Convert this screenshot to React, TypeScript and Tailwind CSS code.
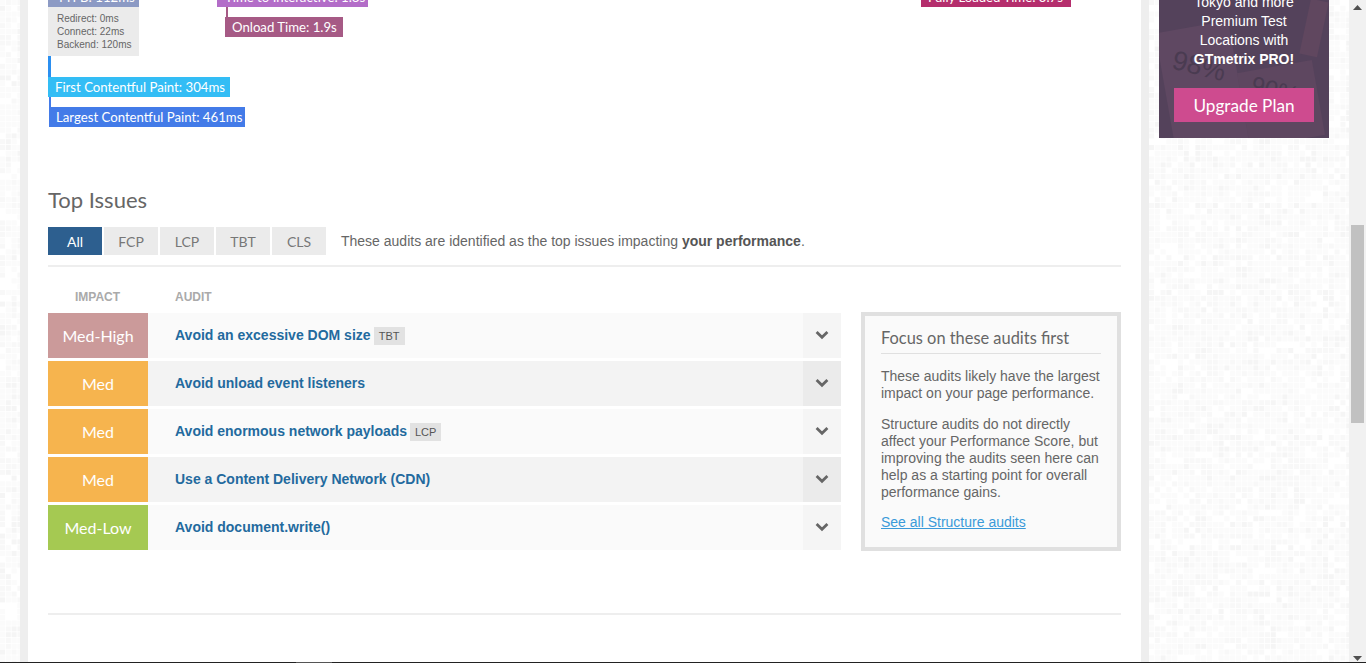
import React from "react";

const label = "[font-family:Lato,'Noto_Sans',sans-serif]";

function Tiles({ seed, cols, rows }: { seed: number; cols: number; rows: number }) {
  const rects: React.ReactElement[] = [];
  let s = seed;
  for (let y = 0; y < rows; y++) {
    for (let x = 0; x < cols; x++) {
      s = (s * 1103515245 + 12345) & 0x7fffffff;
      const v = (s >> 8) % 100;
      if (v < 82) {
        const fill = v < 8 ? "#f5f5f5" : v < 30 ? "#f8f8f8" : "#fbfbfb";
        rects.push(<rect key={`${x}-${y}`} x={x * 5.8} y={y * 5.8} width="5" height="5" fill={fill} />);
      }
    }
  }
  return (
    <svg className="block h-full w-full" aria-hidden="true">
      {rects}
    </svg>
  );
}

function Audit({ impact, color, title, tag, alt }: { impact: string; color: string; title: string; tag?: string; alt?: boolean }) {
  return (
    <div className={`flex h-[45px] items-stretch ${alt ? "bg-[#f3f3f3]" : "bg-[#fafafa]"}`}>
      <div className={`flex w-[100px] items-center justify-center text-[16px] text-white ${label} ${color}`}>{impact}</div>
      <div className="flex flex-1 items-center pl-[27px]">
        <span className="text-[14px] font-bold text-[#236a9e]">{title}</span>
        {tag && (
          <span className="ml-[3px] mt-[1px] flex h-[18px] w-[31px] items-center justify-center bg-[#e2e2e2] text-[11px] text-[#555]">{tag}</span>
        )}
      </div>
      <div className={`flex w-[38px] items-center justify-center pb-[2px] ${alt ? "bg-[#ebebeb]" : "bg-[#f5f5f5]"}`}>
        <svg width="14" height="10" viewBox="0 0 14 10" fill="none" aria-hidden="true">
          <path d="M1.6 2 7 7.2 12.4 2" stroke="#666" strokeWidth="2.8" />
        </svg>
      </div>
    </div>
  );
}

const tabs = ["All", "FCP", "LCP", "TBT", "CLS"];

export default function App() {
  return (
    <div className="relative flex h-[663px] overflow-hidden bg-white font-['Liberation_Sans',Arial,sans-serif] text-[14px] text-[#666]">
      <div className="flex min-w-0 flex-1">
        <div className="h-full w-[20px] shrink-0 overflow-hidden">
          <Tiles seed={7} cols={4} rows={116} />
        </div>
        <div className="h-full w-[8px] shrink-0 bg-[#eeeeee]" />
        <main className="w-[1113px] shrink-0 px-[20px]">
          <div className={`relative h-[127px] ${label} text-[13.2px] text-white`}>
            <div className="absolute left-0 top-[-13px] flex h-[20px] w-[91px] items-center whitespace-nowrap bg-[#8c9ac4] pl-[9px] pt-[2px]">TTFB: 112ms</div>
            <div className="absolute left-0 top-[7px] h-[49px] w-[91px] bg-[#ebebeb] pl-[9px] pt-[5px] font-['Liberation_Sans',Arial,sans-serif] text-[10px] leading-[13px] text-[#666]">
              <div>Redirect: 0ms</div>
              <div>Connect: 22ms</div>
              <div>Backend: 120ms</div>
            </div>
            <div className="absolute left-0 top-[56px] h-[21px] w-[3px] bg-[#2b8ff0]" />
            <div className="absolute left-0 top-[77px] flex h-[20px] w-[182px] items-center whitespace-nowrap bg-[#33bdf5] pl-[7px] pt-[2px]">First Contentful Paint: 304ms</div>
            <div className="absolute left-[1px] top-[97px] h-[10px] w-[2px] bg-[#437be8]" />
            <div className="absolute left-[1px] top-[107px] flex h-[20px] w-[196px] items-center whitespace-nowrap bg-[#437be8] pl-[7px] pt-[2px]">Largest Contentful Paint: 461ms</div>

            <div className="absolute left-[169px] top-[-13px] flex h-[20px] w-[151px] items-center whitespace-nowrap bg-[#b36dc8] pl-[8px] pt-[2px]">Time to Interactive: 1.8s</div>
            <div className="absolute left-[178px] top-[7px] h-[10px] w-[2px] bg-[#a65a85]" />
            <div className="absolute left-[177px] top-[17px] flex h-[20px] w-[118px] items-center whitespace-nowrap bg-[#a65a85] pl-[7px] pt-[2px]">Onload Time: 1.9s</div>

            <div className="absolute left-[873px] top-[-13px] flex h-[20px] w-[150px] items-center whitespace-nowrap bg-[#b52e6d] pl-[7px] pt-[2px]">Fully Loaded Time: 3.7s</div>
          </div>

          <h2 className={`mt-[59px] h-[28px] text-[22px] leading-[28px] text-[#666] ${label}`}>Top Issues</h2>

          <div className="mt-[13px] flex h-[28px] items-stretch gap-[2px]">
            {tabs.map((t, i) => (
              <div
                key={t}
                className={`flex w-[54px] items-center justify-center text-[14px] ${label} ${i === 0 ? "bg-[#2d5f8f] text-white" : "bg-[#ebebeb] text-[#777]"}`}
              >
                {t}
              </div>
            ))}
            <p className="ml-[13px] self-center text-[14px] text-[#666]">
              These audits are identified as the top issues impacting <b className="text-[#555]">your performance</b>.
            </p>
          </div>

          <div className="mt-[10px] h-[2px] bg-[#eeeeee]" />

          <div className="mt-[23px] flex h-[14px] items-center text-[12px] font-bold text-[#aaa]">
            <span className="ml-[27px] w-[100px]">IMPACT</span>
            <span>AUDIT</span>
          </div>

          <div className="mt-[9px] flex items-start gap-[20px]">
            <div className="flex w-[793px] shrink-0 flex-col gap-[3px]">
              <Audit impact="Med-High" color="bg-[#cb9a9a]" title="Avoid an excessive DOM size" tag="TBT" />
              <Audit impact="Med" color="bg-[#f6b44e]" title="Avoid unload event listeners" alt />
              <Audit impact="Med" color="bg-[#f6b44e]" title="Avoid enormous network payloads" tag="LCP" />
              <Audit impact="Med" color="bg-[#f6b44e]" title="Use a Content Delivery Network (CDN)" alt />
              <Audit impact="Med-Low" color="bg-[#a5c952]" title="Avoid document.write()" />
            </div>
            <aside className="-mt-[1px] h-[239px] w-[260px] shrink-0 border-4 border-[#e0e0e0] bg-[#fafafa] px-[16px] pt-[11px] leading-[17px]">
              <h3 className={`border-b border-[#e0e0e0] pb-[4px] text-[16.4px] leading-[22px] text-[#666] ${label}`}>Focus on these audits first</h3>
              <p className="mt-[14px]">These audits likely have the largest impact on your page performance.</p>
              <p className="mt-[14px]">Structure audits do not directly affect your Performance Score, but improving the audits seen here can help as a starting point for overall performance gains.</p>
              <p className="mt-[13px]">
                <a className="text-[#3a9ad9] underline" href="#">See all Structure audits</a>
              </p>
            </aside>
          </div>

          <div className="mt-[62px] h-[2px] bg-[#eeeeee]" />
        </main>
        <div className="h-full w-[8px] shrink-0 bg-[#eeeeee]" />
        <div className="relative h-full w-[200px] shrink-0">
          <div className="absolute inset-0 overflow-hidden">
            <Tiles seed={31} cols={35} rows={116} />
          </div>
          <div className="relative ml-[10px] h-[138px] w-[170px] overflow-hidden bg-[#54425b] text-center text-white">
            <div className="absolute left-[6px] top-[26px] h-[120px] w-[74px] rotate-[-10deg] bg-[#5f4862]" />
            <div className="absolute left-[84px] top-[66px] h-[76px] w-[76px] rotate-[-10deg] bg-[#5e4760]" />
            <div className="absolute left-[146px] top-[0px] h-[56px] w-[18px] rotate-[12deg] bg-[#60475f]" />
            <span className="absolute left-[13px] top-[46px] rotate-[14deg] text-[27px] text-[#4a3b51]">98%</span>
            <span className="absolute left-[92px] top-[72px] rotate-[14deg] text-[24px] text-[#4a3b51]">90%</span>
            <div className="relative -mt-[7px] text-[14px] leading-[19px]">
              <div>Tokyo and more</div>
              <div>Premium Test</div>
              <div>Locations with</div>
              <div className="font-bold">GTmetrix PRO!</div>
            </div>
            <div className={`relative mx-auto mt-[19px] flex h-[34px] w-[140px] items-center justify-center bg-[#ce4b8f] pt-[2px] text-[17.2px] ${label}`}>Upgrade Plan</div>
          </div>
        </div>
      </div>
      <div className="relative h-full w-[17px] shrink-0 bg-[#f1f1f1]">
        <svg className="absolute left-[4px] top-[5px]" width="9" height="5" viewBox="0 0 9 5" aria-hidden="true"><path d="M4.5 0 9 5H0z" fill="#505050" /></svg>
        <div className="absolute left-[2px] top-[225px] h-[198px] w-[13px] bg-[#c1c1c1]" />
        <svg className="absolute bottom-[2px] left-[4px]" width="9" height="5" viewBox="0 0 9 5" aria-hidden="true"><path d="M0 0h9L4.5 5z" fill="#505050" /></svg>
      </div>
      <div className="absolute inset-x-0 bottom-0 h-[1px] bg-[#222]" />
      <div className="absolute bottom-0 left-[296px] h-[1px] w-[36px] bg-[#555]" />
    </div>
  );
}
